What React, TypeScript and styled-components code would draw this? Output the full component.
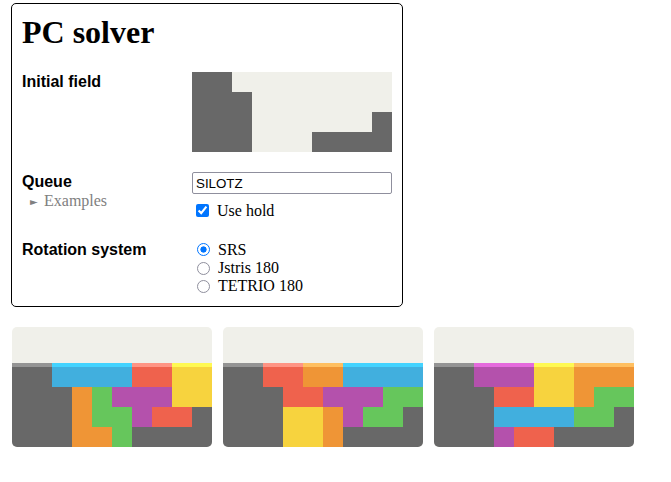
import React from "react";
import styled, { createGlobalStyle } from "styled-components";

const GlobalStyle = createGlobalStyle`
  html, body { margin: 0; padding: 0; background: #fff; }
  body { font-family: "Liberation Serif", "Times New Roman", serif; font-size: 16px; color: #000; }
`;

const COLORS: Record<string, string> = {
  ".": "transparent",
  G: "#686868",
  I: "#41afde",
  O: "#f7d33e",
  T: "#b451ac",
  S: "#66c65c",
  Z: "#ef624d",
  L: "#ef9536",
  J: "#1983bf",
};

const TOPS: Record<string, string> = {
  ".": "transparent",
  G: "#949494",
  I: "#43d3ff",
  O: "#fff952",
  T: "#e56add",
  S: "#88ee86",
  Z: "#ff9484",
  L: "#ffbf60",
  J: "#1ba6f9",
};

const Page = styled.div`
  padding: 3px 0 0 11px;
`;

const Panel = styled.form`
  width: 370px;
  padding: 10px;
  border: 1px solid #000;
  border-radius: 5px;
`;

const Title = styled.h1`
  margin: 0 0 0.67em;
  font-size: 32px;
  font-weight: bold;
  font-family: "Liberation Serif", "Times New Roman", serif;
`;

const Sections = styled.div`
  display: flex;
  flex-direction: column;
  gap: 20px;
`;

const Section = styled.div`
  display: grid;
  grid-template-columns: 170px 200px;
  align-items: start;
`;

const LabelCol = styled.div`
  display: flex;
  flex-direction: column;
`;

const Label = styled.div`
  padding-top: 1px;
  font-family: "Liberation Sans", Arial, sans-serif;
  font-weight: bold;
  font-size: 16px;
`;

const Details = styled.details`
  margin: 1px 0 0 8px;
  color: #808080;
`;

const Summary = styled.summary`
  cursor: pointer;
  list-style: none;
  &::-webkit-details-marker { display: none; }
  &::before {
    content: "►";
    display: inline-block;
    font-family: "DejaVu Sans", sans-serif;
    font-size: 10px;
    width: 14px;
    vertical-align: 1px;
  }
`;

const Board = styled.div<{ $rows: string }>`
  display: grid;
  grid-template-columns: repeat(10, 20px);
  grid-template-rows: ${(p) => p.$rows};
  background: #f0f0ea;
`;

const Cell = styled.div<{ $c: string }>`
  background: ${(p) => p.$c};
`;

const Sky = styled.div`
  grid-column: 1 / -1;
`;

const QueueInput = styled.input`
  box-sizing: border-box;
  width: 200px;
  height: 22px;
  margin: 0;
  padding: 0 3px;
  border: 1px solid #8f8f9d;
  border-radius: 2px;
  font-family: "Liberation Sans", Arial, sans-serif;
  font-size: 13.333px;
  color: #000;
  background: #fff;
`;

const CheckRow = styled.label`
  display: flex;
  align-items: center;
  height: 19px;
  margin-top: 7px;
`;

const Check = styled.input`
  width: 13px;
  height: 13px;
  margin: 0 8px 0 4px;
  accent-color: #0075ff;
`;

const Radios = styled.div`
  display: flex;
  flex-direction: column;
`;

const RadioRow = styled.label`
  display: flex;
  align-items: center;
  height: 18.4px;
`;

const Radio = styled.input`
  appearance: none;
  box-sizing: border-box;
  width: 13px;
  height: 13px;
  margin: 0 8px 0 5px;
  border: 1.5px solid #8f8f9d;
  border-radius: 50%;
  background: #fff;
  &:checked {
    border-color: #0075ff;
    background: radial-gradient(circle, #0075ff 0 2.8px, #fff 3.4px);
  }
`;

const Solutions = styled.div`
  display: flex;
  gap: 11px;
  margin: 20px 0 0 1px;
`;

const Card = styled(Board)`
  border-radius: 5px;
  overflow: hidden;
`;

const FIELD = ["GG........", "GGG.......", "GGG......G", "GGG...GGGG"];

const SOLUTIONS = [
  ["GGIIIIZZOO", "GGGLSTTTOO", "GGGLSSTZZG", "GGGLLSGGGG"],
  ["GGZZLLIIII", "GGGZZTTTSS", "GGGOOLTSSG", "GGGOOLGGGG"],
  ["GGTTTOOLLL", "GGGZZOOLSS", "GGGIIIISSG", "GGGTZZGGGG"],
];

function Cells({ rows, map }: { rows: string[]; map: Record<string, string> }) {
  return (
    <>
      {rows.map((r, y) =>
        r.split("").map((ch, x) => <Cell key={`${y}-${x}`} $c={map[ch]} />)
      )}
    </>
  );
}

export default function App() {
  return (
    <>
      <GlobalStyle />
      <Page>
        <Panel onSubmit={(e) => e.preventDefault()}>
          <Title>PC solver</Title>
          <Sections>
            <Section>
              <Label>Initial field</Label>
              <Board $rows="repeat(4, 20px)">
                <Cells rows={FIELD} map={COLORS} />
              </Board>
            </Section>
            <Section>
              <LabelCol>
                <Label>Queue</Label>
                <Details>
                  <Summary>Examples</Summary>
                </Details>
              </LabelCol>
              <div>
                <QueueInput type="text" defaultValue="SILOTZ" />
                <CheckRow>
                  <Check type="checkbox" defaultChecked />
                  Use hold
                </CheckRow>
              </div>
            </Section>
            <Section>
              <Label>Rotation system</Label>
              <Radios>
                <RadioRow>
                  <Radio type="radio" name="rs" defaultChecked />
                  SRS
                </RadioRow>
                <RadioRow>
                  <Radio type="radio" name="rs" />
                  Jstris 180
                </RadioRow>
                <RadioRow>
                  <Radio type="radio" name="rs" />
                  TETRIO 180
                </RadioRow>
              </Radios>
            </Section>
          </Sections>
        </Panel>
        <Solutions>
          {SOLUTIONS.map((rows, i) => (
            <Card key={i} $rows="36px 4px repeat(4, 20px)">
              <Sky />
              <Cells rows={[rows[0]]} map={TOPS} />
              <Cells rows={rows} map={COLORS} />
            </Card>
          ))}
        </Solutions>
      </Page>
    </>
  );
}
